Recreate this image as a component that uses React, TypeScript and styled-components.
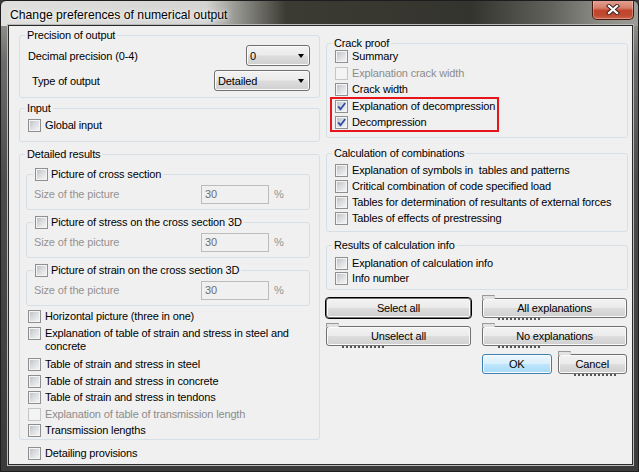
import styled, { createGlobalStyle, css } from 'styled-components';

const GlobalStyle = createGlobalStyle`
  * { box-sizing: border-box; }
  html, body { margin: 0; padding: 0; }
  body {
    background: #3a3a3a;
    font-family: "Liberation Sans", Arial, sans-serif;
    font-size: 11px;
    letter-spacing: -0.15px;
    color: #000;
  }
`;

const Window = styled.div`
  width: 639px;
  height: 472px;
  display: flex;
  flex-direction: column;
  padding: 0 5px 6px 7px;
  border: 1px solid #1d1d1d;
  border-radius: 6px 6px 0 0;
  overflow: hidden;
  background:
    linear-gradient(90deg, #e0e0de 0, #d4d4d2 205px, #8e8e88 240px, rgba(60, 60, 52, 0) 285px) 0 0 / 100% 25px no-repeat,
    linear-gradient(90deg, #45453e 0, #3a3a32 320px, #34342e 470px, #62625c 550px, #8e8e88 600px, #9c9c98 100%) 0 0 / 100% 25px no-repeat,
    linear-gradient(180deg, #a4a4a0 0, #6c6c6a 60px, #4c4c4c 180px, #3a3a3a 100%);
`;

const TitleBar = styled.div`
  flex: none;
  height: 24px;
  display: flex;
  align-items: flex-start;
  justify-content: space-between;
`;

const Title = styled.span`
  padding: 7px 0 0 2px;
  font-size: 12.2px;
  line-height: 14px;
  letter-spacing: 0;
  color: #000;
  text-shadow: 0 0 6px #fff, 0 0 3px #fff;
`;

const CloseButton = styled.div`
  width: 42px;
  height: 20px;
  margin: -1px -1px 0 0;
  display: flex;
  align-items: center;
  justify-content: center;
  border: 1px solid #4a1a12;
  border-top: none;
  border-radius: 0 0 5px 5px;
  background: linear-gradient(180deg, #e6a496 0%, #d57e6a 42%, #c2452c 55%, #bd4a31 80%, #d06448 100%);
  box-shadow: inset 0 0 0 1px rgba(255, 255, 255, 0.3);
`;

const Client = styled.div`
  flex: 1;
  display: grid;
  grid-template-columns: 301px 302px;
  column-gap: 6px;
  align-items: start;
  padding: 0 4px 0 10px;
  background: #f0f0f0;
  border: 1px solid #2a2a2a;
  box-shadow: 0 0 0 1px #bababa;
`;

const Column = styled.div<{ $pt: number }>`
  display: flex;
  flex-direction: column;
  padding-top: ${p => p.$pt}px;
`;

const Group = styled.fieldset<{ $pt?: number; $pb?: number; $mt?: number }>`
  min-width: 0;
  margin: ${p => p.$mt ?? 0}px 0 0;
  padding: ${p => p.$pt ?? 3}px 9px ${p => p.$pb ?? 6}px 8px;
  border: 1px solid #d5dfe5;
  border-radius: 3px;
`;

const SubGroup = styled(Group)`
  margin-left: -2px;
  padding: ${p => p.$pt ?? 3}px 0 ${p => p.$pb ?? 5}px 7px;
`;

const Legend = styled.legend`
  margin-left: -3px;
  padding: 0 2px;
  line-height: 13px;
`;

const CheckLegend = styled(Legend)`
  margin-left: -1px;
`;

const LegendCheck = styled.span`
  display: inline-flex;
  align-items: flex-start;
  gap: 3px;
`;

const Fields = styled.div`
  display: flex;
  flex-direction: column;
  gap: 4px;
`;

const FieldRow = styled.div<{ $indent?: number }>`
  height: 21px;
  display: flex;
  align-items: center;
  justify-content: space-between;
  padding-left: ${p => p.$indent ?? 0}px;
`;

const Combo = styled.div<{ $w: number }>`
  width: ${p => p.$w}px;
  height: 21px;
  display: flex;
  align-items: center;
  justify-content: space-between;
  padding: 0 5px 0 3px;
  border: 1px solid #707070;
  border-radius: 3px;
  background: linear-gradient(180deg, #f2f2f2 0%, #ebebeb 48%, #dddddd 52%, #cfcfcf 100%);
  box-shadow: inset 0 0 0 1px #fbfbfb;
`;

const Arrow = styled.span`
  width: 0;
  height: 0;
  border-top: 4px solid #000;
  border-left: 3.5px solid transparent;
  border-right: 3.5px solid transparent;
`;

const Stack = styled.div<{ $mt?: number; $row?: number; $pl?: number }>`
  --row: ${p => p.$row ?? 16.5}px;
  display: flex;
  flex-direction: column;
  margin-top: ${p => p.$mt ?? 0}px;
  padding-left: ${p => p.$pl ?? 0}px;
`;

const Item = styled.div<{ $disabled?: boolean; $extra?: number }>`
  display: flex;
  align-items: flex-start;
  gap: 4px;
  min-height: var(--row);
  padding: calc((var(--row) - 13px) / 2) 0;
  margin-bottom: ${p => p.$extra ?? 0}px;
  line-height: 13px;
  color: ${p => (p.$disabled ? '#8c8c8c' : '#000')};
`;

const Label = styled.span`
  white-space: pre-wrap;
`;

const Box = styled.span<{ $disabled?: boolean }>`
  flex: none;
  width: 13px;
  height: 13px;
  display: flex;
  padding: 1px;
  border: 1px solid ${p => (p.$disabled ? '#c6c6c6' : '#8e8f8f')};
  background: #f4f4f4;
`;

const BoxFace = styled.span<{ $disabled?: boolean }>`
  flex: 1;
  display: flex;
  ${p =>
    p.$disabled
      ? css`
          background: #f4f4f4;
        `
      : css`
          background: linear-gradient(135deg, #bfc3ca 0%, #dcdee1 50%, #f3f3f4 100%);
        `}
`;

const SizeRow = styled.div`
  height: 19px;
  display: flex;
  align-items: center;
  color: #939393;
`;

const SizeLabel = styled.span`
  flex: 1;
`;

const SizeInput = styled.div`
  width: 68px;
  height: 19px;
  padding-left: 3px;
  line-height: 17px;
  color: #6d6d6d;
  border: 1px solid #bcbcbc;
  background: #f0f0f0;
`;

const Percent = styled.span`
  width: 40px;
  padding-left: 5px;
`;

const Highlight = styled.div`
  width: 167px;
  margin-left: -4px;
  padding-left: 4px;
  outline: 2px solid #e8141c;
  outline-offset: -1px;
`;

const ButtonGrid = styled.div`
  display: grid;
  grid-template-columns: 145px 145px;
  column-gap: 11px;
  row-gap: 8px;
  margin-top: 8px;
`;

const ButtonPair = styled.div`
  display: grid;
  grid-template-columns: 1fr 1fr;
  column-gap: 6px;
`;

const Button = styled.div<{ $default?: boolean; $hot?: boolean; $glitch?: boolean }>`
  position: relative;
  height: 20px;
  display: flex;
  align-items: center;
  justify-content: center;
  border: 1px solid #707070;
  border-radius: 3px;
  background: linear-gradient(180deg, #f2f2f2 0%, #ebebeb 48%, #dddddd 52%, #cfcfcf 100%);
  box-shadow: inset 0 0 0 1px #fbfbfb;
  ${p =>
    p.$default &&
    css`
      outline: 1px solid #000;
    `}
  ${p =>
    p.$hot &&
    css`
      border-color: #3c7fb1;
      background: linear-gradient(180deg, #eaf6fd 0%, #d9f0fc 48%, #bee6fd 52%, #a7d9f5 100%);
    `}
  ${p =>
    p.$glitch &&
    css`
      &::before {
        content: '';
        position: absolute;
        left: -1px;
        top: -4px;
        width: 11px;
        height: 3px;
        border: 1px solid #9a9a9a;
        border-bottom: none;
        border-right-color: #c8c8c8;
        background: #e2e2e2;
      }
      &::after {
        content: '';
        position: absolute;
        left: 15px;
        bottom: -3px;
        width: 42px;
        height: 2px;
        background: repeating-linear-gradient(90deg, #555 0 2px, transparent 2px 4px);
      }
    `}
`;

const CheckBox = ({ checked, disabled }: { checked?: boolean; disabled?: boolean }) => (
  <Box $disabled={disabled}>
    <BoxFace $disabled={disabled}>
      {checked && (
        <svg width="9" height="9" viewBox="0 0 9 9" style={{ overflow: 'visible' }}>
          <path d="M1.2 4.4 3.5 7.2 8.2 1" fill="none" stroke="#2f4fa3" strokeWidth="1.8" />
        </svg>
      )}
    </BoxFace>
  </Box>
);

type CheckProps = { label: string; checked?: boolean; disabled?: boolean; extra?: number };

const Check = ({ label, checked, disabled, extra }: CheckProps) => (
  <Item $disabled={disabled} $extra={extra}>
    <CheckBox checked={checked} disabled={disabled} />
    <Label>{label}</Label>
  </Item>
);

const PictureGroup = ({ title }: { title: string }) => (
  <SubGroup $pt={3} $pb={5} $mt={0}>
    <CheckLegend>
      <LegendCheck>
        <CheckBox />
        {title}
      </LegendCheck>
    </CheckLegend>
    <SizeRow>
      <SizeLabel>Size of the picture</SizeLabel>
      <SizeInput>30</SizeInput>
      <Percent>%</Percent>
    </SizeRow>
  </SubGroup>
);

const SubStack = styled.div`
  display: flex;
  flex-direction: column;
  gap: 6px;
`;

export default function App() {
  return (
    <>
      <GlobalStyle />
      <Window>
        <TitleBar>
          <Title>Change preferences of numerical output</Title>
          <CloseButton>
            <svg width="14" height="11" viewBox="0 0 14 11">
              <path d="M3 2 11 9 M11 2 3 9" stroke="#3b2420" strokeWidth="4.2" strokeLinecap="square" />
              <path d="M3 2 11 9 M11 2 3 9" stroke="#fff" strokeWidth="2.3" strokeLinecap="square" />
            </svg>
          </CloseButton>
        </TitleBar>
        <Client>
          <Column $pt={2.5}>
            <Group $pt={3.5} $pb={6}>
              <Legend>Precision of output</Legend>
              <Fields>
                <FieldRow>
                  <span>Decimal precision (0-4)</span>
                  <Combo $w={64}>
                    0<Arrow />
                  </Combo>
                </FieldRow>
                <FieldRow $indent={4}>
                  <span>Type of output</span>
                  <Combo $w={96}>
                    Detailed
                    <Arrow />
                  </Combo>
                </FieldRow>
              </Fields>
            </Group>

            <Group $mt={3.5} $pt={2.25} $pb={7.75}>
              <Legend>Input</Legend>
              <Stack>
                <Check label="Global input" />
              </Stack>
            </Group>

            <Group $mt={5.5} $pt={7} $pb={0}>
              <Legend>Detailed results</Legend>
              <SubStack>
                <PictureGroup title="Picture of cross section" />
                <PictureGroup title="Picture of stress on the cross section 3D" />
                <PictureGroup title="Picture of strain on the cross section 3D" />
              </SubStack>
              <Stack $mt={3}>
                <Check label="Horizontal picture (three in one)" />
                <Check label="Explanation of table of strain and stress in steel and concrete" extra={2} />
                <Check label="Table of strain and stress in steel" />
                <Check label="Table of strain and stress in concrete" />
                <Check label="Table of strain and stress in tendons" />
                <Check label="Explanation of table of transmission length" disabled />
                <Check label="Transmission lengths" />
              </Stack>
            </Group>

            <Stack $mt={5.5} $pl={9}>
              <Check label="Detailing provisions" />
            </Stack>
          </Column>

          <Column $pt={11}>
            <Group $pt={0} $pb={6.25}>
              <Legend>Crack proof</Legend>
              <Stack $mt={-1.75}>
                <Check label="Summary" />
                <Check label="Explanation crack width" disabled />
                <Check label="Crack width" />
                <Highlight>
                  <Check label="Explanation of decompression" checked />
                  <Check label="Decompression" checked />
                </Highlight>
              </Stack>
            </Group>

            <Group $mt={8.8} $pt={3.35} $pb={5}>
              <Legend>Calculation of combinations</Legend>
              <Stack $row={15.7}>
                <Check label="Explanation of symbols in  tables and patterns" />
                <Check label="Critical combination of code specified load" />
                <Check label="Tables for determination of resultants of external forces" />
                <Check label="Tables of effects of prestressing" />
              </Stack>
            </Group>

            <Group $mt={7.5} $pt={3.5} $pb={3}>
              <Legend>Results of calculation info</Legend>
              <Stack $row={15}>
                <Check label="Explanation of calculation info" />
                <Check label="Info number" />
              </Stack>
            </Group>

            <ButtonGrid>
              <Button $default>Select all</Button>
              <Button $glitch>All explanations</Button>
              <Button $glitch>Unselect all</Button>
              <Button $glitch>No explanations</Button>
              <span />
              <ButtonPair>
                <Button $hot>OK</Button>
                <Button $glitch>Cancel</Button>
              </ButtonPair>
            </ButtonGrid>
          </Column>
        </Client>
      </Window>
    </>
  );
}
